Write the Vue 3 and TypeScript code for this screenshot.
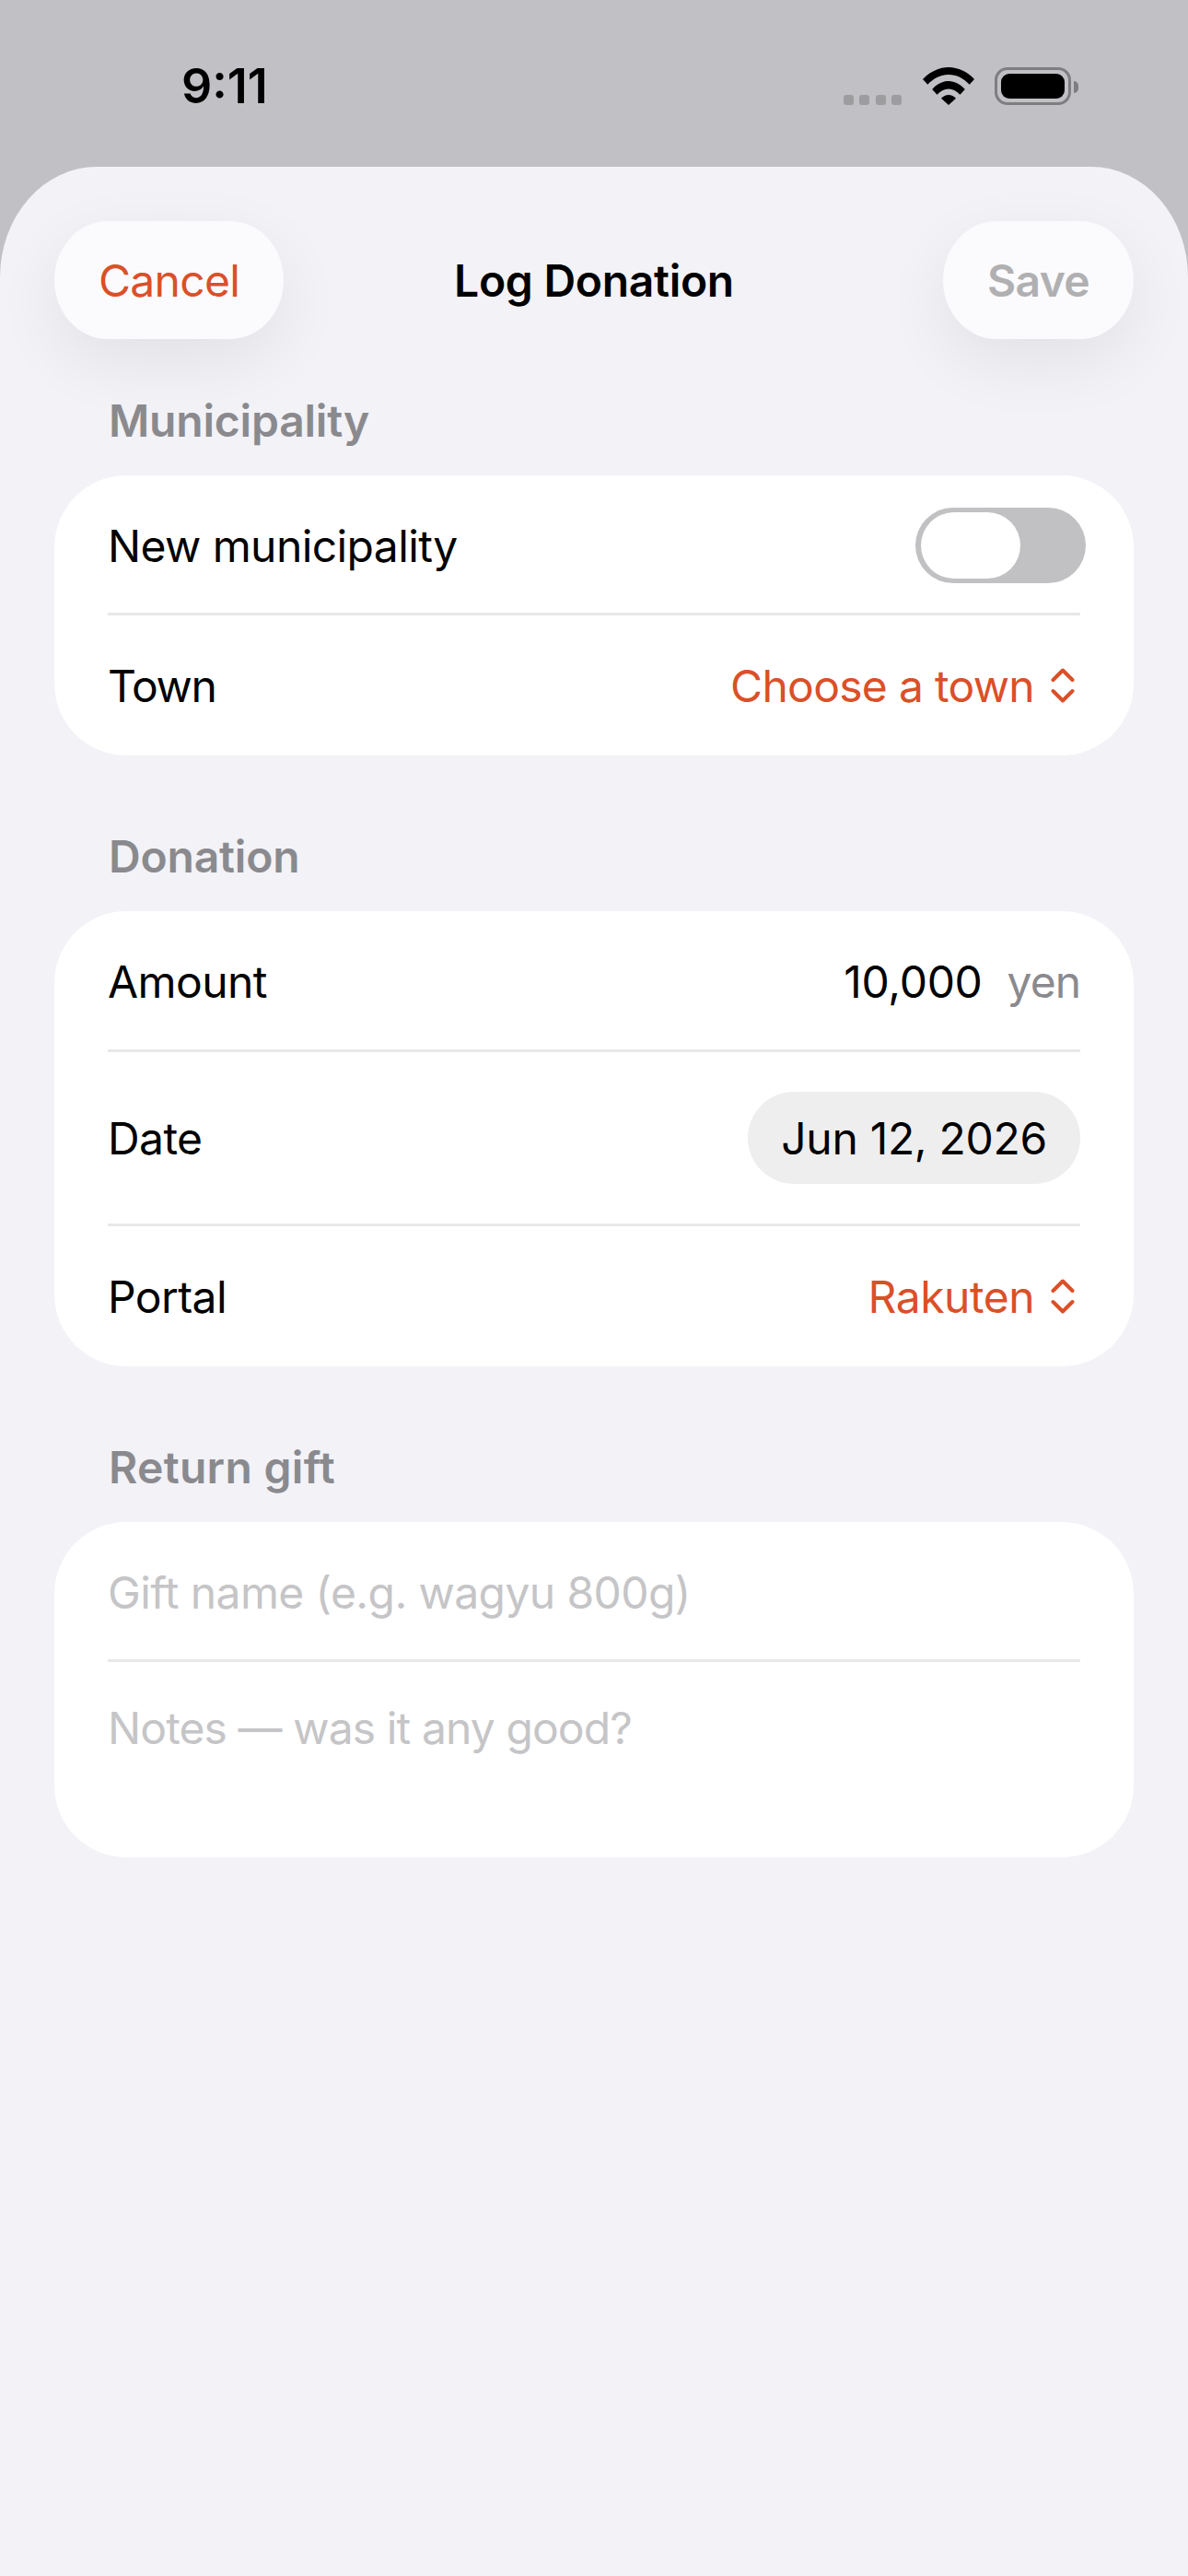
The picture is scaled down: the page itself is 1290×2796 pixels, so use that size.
<template>
  <div class="screen">
    <!-- status bar -->
    <div class="status">
      <span class="status__time">9:11</span>
      <div class="status__icons">
        <div class="signal"><i v-for="n in 4" :key="n"></i></div>
        <svg class="wifi" viewBox="0 0 56 41" width="56" height="41">
          <path d="M0 13C7.500 4.800 17.500 0 28 0s20.500 4.800 28 13l-5.300 5.800C44.500 12 36.500 8 28 8S11.500 12 5.300 18.800z" />
          <path d="M10.200 24C15 18.500 21.300 15 28 15s13 3.500 17.800 9l-5.300 5.800C37 26 32.700 23.500 28 23.500S19 26 15.500 29.800z" />
          <path d="M20 33.800C22.200 31.300 25 30 28 30s5.800 1.300 8 3.800L28 41z" />
        </svg>
        <div class="battery"><div class="battery__fill"></div><div class="battery__cap"></div></div>
      </div>
    </div>

    <div class="sheet">
      <header class="nav">
        <button class="nav__btn nav__btn--cancel">Cancel</button>
        <span class="nav__title">Log Donation</span>
        <button class="nav__btn nav__btn--save">Save</button>
      </header>

      <section class="group">
        <h2 class="group__label">Municipality</h2>
        <div class="card">
          <div class="row row--toggle">
            <span>New municipality</span>
            <div class="toggle"><div class="toggle__knob"></div></div>
          </div>
          <div class="row row--town">
            <span class="tight">Town</span>
            <span class="picker">Choose a town
              <svg class="updown" viewBox="0 0 26 38" width="26" height="38"><path d="M2.500 13 13 2.500 23.500 13M2.500 25 13 35.500 23.500 25" /></svg>
            </span>
          </div>
        </div>
      </section>

      <section class="group">
        <h2 class="group__label">Donation</h2>
        <div class="card">
          <div class="row row--amount">
            <span>Amount</span>
            <span class="amount">10,000<em>yen</em></span>
          </div>
          <div class="row row--date">
            <span>Date</span>
            <span class="pill">Jun 12, 2026</span>
          </div>
          <div class="row row--portal">
            <span>Portal</span>
            <span class="picker picker--short">Rakuten
              <svg class="updown" viewBox="0 0 26 38" width="26" height="38"><path d="M2.500 13 13 2.500 23.500 13M2.500 25 13 35.500 23.500 25" /></svg>
            </span>
          </div>
        </div>
      </section>

      <section class="group">
        <h2 class="group__label group__label--wide">Return gift</h2>
        <div class="card">
          <div class="row row--gift placeholder">Gift name (e.g. wagyu 800g)</div>
          <div class="row row--notes placeholder">Notes — was it any good?</div>
        </div>
      </section>
    </div>
  </div>
</template>

<script setup lang="ts">
</script>

<style>
html, body {
  margin: 0;
  background: #c1c0c5;
}
</style>

<style scoped>
.screen {
  width: 1290px;
  height: 2796px;
  overflow: hidden;
  background: #c1c0c5;
  font-family: Inter, "Liberation Sans", sans-serif;
  color: #000;
}

/* status bar */
.status {
  height: 181px;
  display: flex;
  justify-content: space-between;
  box-sizing: border-box;
  padding: 0 127px 0 197px;
}
.status__time {
  margin-top: 68px;
  font-size: 52px;
  line-height: 52px;
  font-weight: 600;
}
.status__icons {
  display: flex;
  align-items: flex-start;
  padding-top: 73px;
}
.signal {
  display: flex;
  gap: 6.500px;
  margin-top: 30px;
  margin-right: 23px;
}
.signal i {
  width: 11px;
  height: 11px;
  border-radius: 3px;
  background: #9d9d9f;
}
.wifi {
  fill: #000;
  margin-right: 22px;
}
.battery {
  position: relative;
  box-sizing: border-box;
  width: 83px;
  height: 41px;
  padding: 4px;
  border: 3px solid #7e7e80;
  border-radius: 14px;
}
.battery__fill {
  height: 100%;
  border-radius: 9px;
  background: #000;
}
.battery__cap {
  position: absolute;
  right: -11px;
  top: 12px;
  width: 5px;
  height: 13px;
  border-radius: 0 5px 5px 0;
  background: #7e7e80;
}

/* sheet */
.sheet {
  height: 2615px;
  box-sizing: border-box;
  padding: 59px 59px 0;
  background: #f2f2f7;
  border-radius: 105px 105px 0 0 / 120px 120px 0 0;
}
.nav {
  display: grid;
  grid-template-columns: 1fr auto 1fr;
  align-items: center;
  height: 128px;
}
.nav__btn {
  height: 128px;
  border: 0;
  border-radius: 58px / 64px;
  background: #fbfbfe;
  box-shadow: 0 24px 72px rgba(0, 0, 0, 0.07);
  font: 400 48px Inter, "Liberation Sans", sans-serif;
  padding: 0;
}
.nav__btn--cancel {
  width: 249px;
  color: #da5028;
  letter-spacing: -0.7px;
}
.nav__btn--save {
  width: 207px;
  justify-self: end;
  color: #b0b0b2;
  font-weight: 600;
  letter-spacing: -0.6px;
}
.nav__title {
  font-size: 48px;
  font-weight: 600;
  letter-spacing: -0.3px;
}

.group {
  margin-bottom: 81px;
}
.group__label {
  margin: 0;
  padding: 0 59px;
  font-size: 48px;
  line-height: 58px;
  font-weight: 600;
  letter-spacing: -0.2px;
  color: #8a8a8e;
}
.group__label--wide {
  letter-spacing: 0.3px;
}
.nav + .group .group__label {
  margin-top: 60px;
}
.card {
  margin-top: 30px;
  background: #fff;
  border-radius: 78px;
  padding: 0 58px;
  font-size: 48px;
  letter-spacing: -0.6px;
}
.row {
  display: flex;
  align-items: center;
  justify-content: space-between;
  box-sizing: border-box;
}
.row + .row {
  border-top: 3px solid #e8e8ea;
}
.row--toggle { height: 149px; padding-top: 3px; }
.row--town { height: 155px; }
.row--amount { height: 150px; padding-top: 3px; }
.row--date { height: 189px; }
.row--portal { height: 155px; }
.row--gift { height: 149px; padding-top: 4px; }
.row--notes { height: 215px; align-items: flex-start; padding-top: 42px; letter-spacing: -0.9px; }

.tight {
  letter-spacing: -1.3px;
}
.toggle {
  box-sizing: border-box;
  width: 185px;
  height: 82px;
  margin-right: -6px;
  padding: 5px 6px;
  border-radius: 41px;
  background: #c1c1c3;
}
.toggle__knob {
  width: 108px;
  height: 72px;
  border-radius: 36px;
  background: #fff;
}
.picker {
  display: flex;
  align-items: center;
  gap: 18px;
  color: #da5028;
  margin-right: 6px;
  letter-spacing: -0.7px;
}
.picker--short {
  letter-spacing: -0.5px;
}
.updown {
  fill: none;
  stroke: #da5028;
  stroke-width: 4;
  stroke-linecap: round;
  stroke-linejoin: round;
}
.amount {
  letter-spacing: -0.3px;
}
.amount em {
  font-style: normal;
  color: #8a8a8e;
  margin-left: 27px;
  letter-spacing: -1px;
}
.pill {
  display: flex;
  align-items: center;
  height: 100px;
  box-sizing: border-box;
  padding: 0 36px;
  border-radius: 50px;
  background: #eeeeef;
  letter-spacing: -0.3px;
}
.placeholder {
  color: #c5c5c7;
}
</style>
